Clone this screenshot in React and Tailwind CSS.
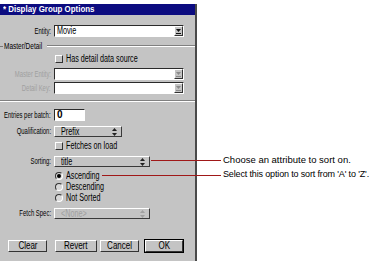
import React from "react";

const font = "font-['Liberation_Sans',Arial,sans-serif]";

const Txt = ({ children, className = "" }) => (
  <span className={`inline-block whitespace-nowrap scale-x-[0.72] origin-left ${className}`}>
    {children}
  </span>
);

const UpDown = ({ color = "#222" }) => (
  <svg width="5" height="8" viewBox="0 0 5 8" className="shrink-0">
    <path d="M2.5 0 L5 3 L0 3 Z" fill={color} />
    <path d="M2.5 8 L5 5 L0 5 Z" fill={color} />
  </svg>
);

const Label = ({ children, disabled }) => (
  <div
    className={`w-[54px] shrink-0 flex justify-end pr-[3px] text-[9px] leading-none whitespace-nowrap ${
      disabled ? "text-[#a0a0a0]" : "text-black"
    }`}
  >
    <span className="inline-block shrink-0 scale-x-[0.66] origin-right">{children}</span>
  </div>
);

const ComboInput = ({ value, disabled }) => (
  <div className="w-[130px] h-[12px] flex border border-t-[#2a2a2a] border-l-[#2a2a2a] border-b-white border-r-white">
    <div className="flex-1 bg-white text-[10px] leading-[10px] pl-[2px] text-black overflow-hidden">
      <Txt>{value}</Txt>
    </div>
    <div className="w-[9px] bg-[#c4c4c4] border border-t-white border-l-white border-b-[#333] border-r-[#333] flex flex-col items-center justify-center gap-[1px]">
      <svg width="5" height="3" viewBox="0 0 5 3">
        <path d="M0 0 L5 0 L2.5 3 Z" fill={disabled ? "#8a8a8a" : "#111"} />
      </svg>
      <div className={`w-[5px] h-[1px] ${disabled ? "bg-[#8a8a8a]" : "bg-[#111]"}`} />
    </div>
  </div>
);

const PopUp = ({ value, width, disabled }) => (
  <div
    className={`${width} h-[11px] flex items-center justify-between pl-[6px] pr-[4px] bg-[#c4c4c4] border border-t-white border-l-white border-b-[#3a3a3a] border-r-[#3a3a3a] text-[10px] leading-none ${
      disabled ? "text-[#a0a0a0]" : "text-black"
    }`}
  >
    <Txt>{value}</Txt>
    <UpDown color={disabled ? "#a0a0a0" : "#222"} />
  </div>
);

const Check = ({ label }) => (
  <div className="flex items-center h-[10px] pl-[55px]">
    <div className="w-[8px] h-[8px] shrink-0 bg-[#c4c4c4] border border-t-white border-l-white border-b-[#333] border-r-[#333]" />
    <span className="ml-[3px] text-[10px] leading-none text-black">
      <Txt>{label}</Txt>
    </span>
  </div>
);

const Radio = ({ label, on }) => (
  <div className="flex items-center h-[10px] pl-[55px]">
    <div className="w-[8px] h-[8px] shrink-0 rounded-full bg-[#d8d8d8] border border-t-[#333] border-l-[#333] border-b-white border-r-white flex items-center justify-center">
      {on && <div className="w-[4px] h-[4px] rounded-full bg-black" />}
    </div>
    <span className="ml-[3px] text-[10px] leading-none text-black">
      <Txt>{label}</Txt>
    </span>
  </div>
);

const Button = ({ children, width, isDefault }) => (
  <div className={isDefault ? "border border-black" : ""}>
    <div
      className={`${width} h-[12px] flex items-center justify-center bg-[#c4c4c4] border border-t-white border-l-white border-b-[#333] border-r-[#333] text-[10px] leading-none text-black`}
    >
      <span className="inline-block whitespace-nowrap scale-x-[0.8]">{children}</span>
    </div>
  </div>
);

export default function App() {
  return (
    <div className={`w-[385px] h-[261px] bg-white relative overflow-hidden ${font}`}>
      <div className="pt-[4px] w-[197px] h-full">
        <div className="h-full bg-[#c4c4c4] border-r-2 border-[#4a4a4a] flex flex-col">
          {/* Title bar */}
          <div className="h-[11px] bg-[#0c0c80] text-white font-bold text-[9px] leading-[11px] pl-[3px] whitespace-nowrap">
            <span className="inline-block scale-x-[0.88] origin-left">* Display Group Options</span>
          </div>

          {/* Entity */}
          <div className="flex items-center mt-[10px]">
            <Label>Entity:</Label>
            <ComboInput value="Movie" />
          </div>

          {/* Master/Detail group */}
          <div className="flex items-center h-[10px] mt-[4px]">
            <div className="w-[3px] h-px bg-[#777]" />
            <span className="w-[44px] px-[1px] text-[9px] leading-none text-black whitespace-nowrap">
              <span className="inline-block scale-x-[0.72] origin-left">Master/Detail</span>
            </span>
            <div className="flex-1 flex flex-col">
              <div className="h-px bg-[#808080]" />
              <div className="h-px bg-white" />
            </div>
          </div>
          <div className="mt-[3px]">
            <Check label="Has detail data source" />
          </div>
          <div className="flex items-center mt-[4px]">
            <Label disabled>Master Entity:</Label>
            <ComboInput value="" disabled />
          </div>
          <div className="flex items-center mt-[2px]">
            <Label disabled>Detail Key:</Label>
            <ComboInput value="" disabled />
          </div>

          {/* Separator */}
          <div className="mt-[6px] flex flex-col">
            <div className="h-px bg-[#808080]" />
            <div className="h-px bg-white" />
          </div>

          {/* Entries per batch */}
          <div className="flex items-center mt-[7px]">
            <Label>Entries per batch:</Label>
            <div className="w-[31px] h-[12px] bg-white border border-t-[#2a2a2a] border-l-[#2a2a2a] border-b-white border-r-white text-[10px] leading-[10px] pl-[2px] font-bold">
              0
            </div>
          </div>

          <div className="flex items-center mt-[5px]">
            <Label>Qualification:</Label>
            <PopUp value="Prefix" width="w-[68px]" />
          </div>

          <div className="mt-[4px]">
            <Check label="Fetches on load" />
          </div>

          <div className="flex items-center mt-[5px]">
            <Label>Sorting:</Label>
            <PopUp value="title" width="w-[96px]" />
          </div>

          <div className="mt-[4px] flex flex-col gap-[1px]">
            <Radio label="Ascending" on />
            <Radio label="Descending" />
            <Radio label="Not Sorted" />
          </div>

          <div className="flex items-center mt-[5px]">
            <Label>Fetch Spec:</Label>
            <PopUp value="<None>" width="w-[96px]" disabled />
          </div>

          {/* Buttons */}
          <div className="flex items-center mt-[20px] pl-[8px]">
            <Button width="w-[39px]">Clear</Button>
            <div className="ml-[8px]">
              <Button width="w-[42px]">Revert</Button>
            </div>
            <div className="ml-[3px]">
              <Button width="w-[39px]">Cancel</Button>
            </div>
            <div className="ml-[5px]">
              <Button width="w-[38px]" isDefault>
                OK
              </Button>
            </div>
          </div>
        </div>
      </div>

      {/* Callouts */}
      <div className="absolute left-[151px] top-[160px] w-[70px] h-px bg-[#a01818]" />
      <div className="absolute left-[223px] top-[155px] text-[9.5px] leading-none text-black whitespace-nowrap">
        Choose an attribute to sort on.
      </div>
      <div className="absolute left-[102px] top-[175px] w-[119px] h-px bg-[#a01818]" />
      <div className="absolute left-[223px] top-[170px] text-[9px] tracking-[-0.15px] leading-none text-black whitespace-nowrap">
        Select this option to sort from 'A' to 'Z'.
      </div>
    </div>
  );
}
